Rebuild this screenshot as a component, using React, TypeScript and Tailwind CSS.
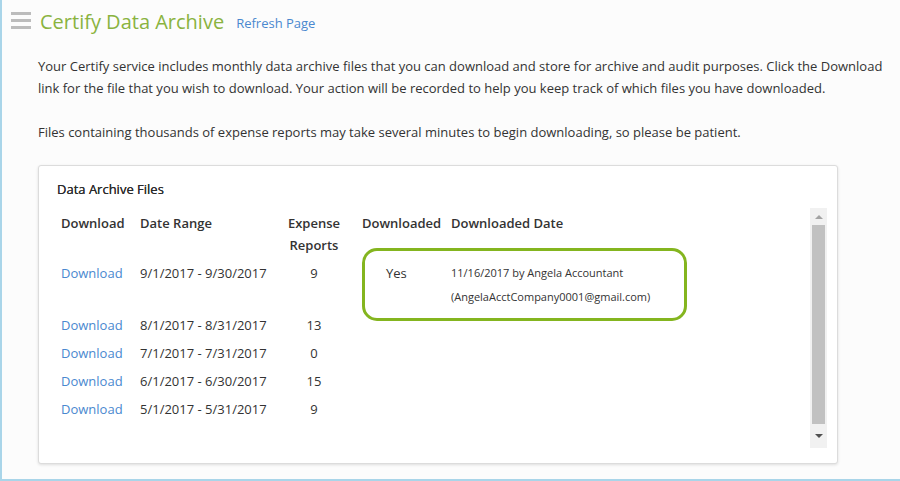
import React from "react";

const rows = [
  { range: "8/1/2017 - 8/31/2017", n: "13" },
  { range: "7/1/2017 - 7/31/2017", n: "0" },
  { range: "6/1/2017 - 6/30/2017", n: "15" },
  { range: "5/1/2017 - 5/31/2017", n: "9" },
];

export default function App() {
  return (
    <div
      className="w-[900px] h-[481px] bg-[#fcfcfc] border-l-2 border-b-2 border-[#a9d5e9] text-[#333333] overflow-hidden"
      style={{ fontFamily: '"Open Sans", sans-serif' }}
    >
      <div className="flex items-center h-[40px] pl-[9px] pt-[4px]">
        <div className="flex flex-col gap-[4px] w-[20px] mr-[9px] -mt-[4px]">
          <div className="h-[3px] bg-[#bcbcbc]" />
          <div className="h-[3px] bg-[#bcbcbc]" />
          <div className="h-[3px] bg-[#bcbcbc]" />
        </div>
        <div className="text-[20px] leading-[28px] text-[#8ab33f]">Certify Data Archive</div>
        <div className="ml-[12px] text-[13px] text-[#4a88cf] pt-[3px]">Refresh Page</div>
      </div>
      <div className="pl-[36px] pr-[10px] pt-[15px] text-[13px] leading-[22px]">
        <p>
          Your Certify service includes monthly data archive files that you can download and store for archive and audit purposes. Click the Download link for the file that you wish to download. Your action will be recorded to help you keep track of which files you have downloaded.
        </p>
        <p className="mt-[22px]">
          Files containing thousands of expense reports may take several minutes to begin downloading, so please be patient.
        </p>
      </div>
      <div className="relative ml-[36px] mt-[22px] w-[800px] h-[299px] bg-white border border-[#dcdcdc] rounded-[3px] shadow-[0_1px_3px_rgba(0,0,0,0.12)]">
        <div className="pl-[18px] pt-[12px] text-[13px] leading-[22px] text-[#2b2b2b] [text-shadow:0_0_0.3px_#2b2b2b]">Data Archive Files</div>
        <div className="flex mt-[8px] h-[240px] pr-[10px]">
          <div className="flex-1 pl-[22px] pt-[4px] text-[13px]">
            <div className="grid grid-cols-[79px_141px_66px_104px_1fr] font-semibold leading-[22px]">
              <div>Download</div>
              <div>Date Range</div>
              <div className="text-center">Expense<br />Reports</div>
              <div className="pl-[15px]">Downloaded</div>
              <div>Downloaded Date</div>
            </div>
            <div className="grid grid-cols-[79px_141px_66px_104px_1fr] pt-[5px] pb-[2px] leading-[24px]">
              <div className="text-[#4a88cf]">Download</div>
              <div>9/1/2017 - 9/30/2017</div>
              <div className="text-center">9</div>
              <div className="pl-[39px]">Yes</div>
              <div className="text-[11px]">
                11/16/2017 by Angela Accountant
                <br />
                (AngelaAcctCompany0001@gmail.com)
              </div>
            </div>
            {rows.map((r) => (
              <div key={r.range} className="grid grid-cols-[79px_141px_66px_104px_1fr] leading-[28px]">
                <div className="text-[#4a88cf]">Download</div>
                <div>{r.range}</div>
                <div className="text-center">{r.n}</div>
                <div />
                <div />
              </div>
            ))}
          </div>
          <div className="w-[17px] bg-[#f1f1f1] flex flex-col items-center">
            <div className="h-[17px] flex items-center justify-center">
              <div className="w-0 h-0 border-l-[4px] border-r-[4px] border-b-[4px] border-l-transparent border-r-transparent border-b-[#a3a3a3]" />
            </div>
            <div className="w-[13px] flex-1 bg-[#c1c1c1]" />
            <div className="h-[24px] flex items-center justify-center">
              <div className="w-0 h-0 border-l-[4px] border-r-[4px] border-t-[4px] border-l-transparent border-r-transparent border-t-[#505050]" />
            </div>
          </div>
        </div>
        <div className="absolute left-[323px] top-[82px] w-[325px] h-[73px] border-[3px] border-[#84b51f] rounded-[15px]" />
      </div>
    </div>
  );
}
